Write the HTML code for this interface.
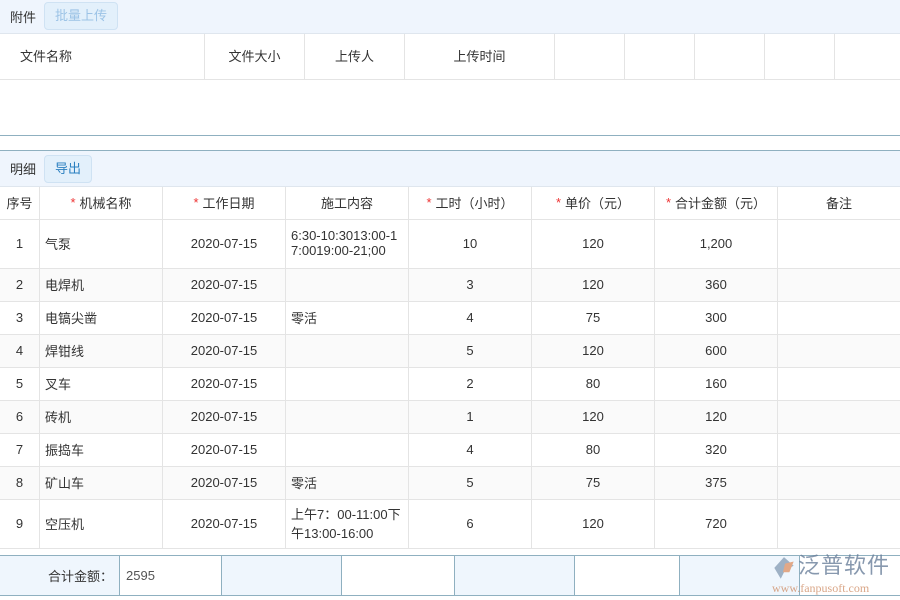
<!DOCTYPE html><html><head><style>
*{margin:0;padding:0;box-sizing:border-box}
body{width:900px;height:600px;background:#fff;font-family:"Liberation Sans","Noto Sans CJK SC",sans-serif;font-size:13px;color:#333;position:relative;overflow:hidden}
.bar{position:absolute;left:0;width:900px;background:#eff5fd;}
.btn{position:absolute;border:1px solid #cfe2f3;background:#e3f0fb;border-radius:4px;font-size:13px;text-align:center}
.c{position:absolute;display:flex;align-items:center;justify-content:center;border-right:1px solid #e4e4e4;border-bottom:1px solid #e4e4e4;padding-bottom:2px}
.l{justify-content:flex-start;padding-left:5px}
.s{color:#e33;margin-right:4px}
</style></head><body>
<div class="bar" style="top:0;height:34px;border-bottom:1px solid #dfe6ee"></div>
<div style="position:absolute;left:10px;top:7px">附件</div>
<div class="btn" style="left:44px;top:2px;width:74px;height:28px;line-height:26px;color:#9cc3e6">批量上传</div>
<div style="position:absolute;top:135px;left:0;width:900px;border-top:1px solid #8fb0c0"></div>
<div class="bar" style="top:150px;height:37px;border-top:1px solid #8fb0c0;border-bottom:1px solid #dfe6ee"></div>
<div style="position:absolute;left:10px;top:159px">明细</div>
<div class="btn" style="left:44px;top:155px;width:48px;height:28px;line-height:26px;color:#2a7fc0">导出</div>
<div style="position:absolute;top:555px;left:0;width:900px;height:41px;border-top:1px solid #8fb0c0;border-bottom:1px solid #8fb0c0"></div>
<script>
function cell(x,y,w,h,t,cls,bg,nb){var d=document.createElement('div');d.className='c '+(cls||'');d.style.cssText=`left:${x}px;top:${y}px;width:${w}px;height:${h}px;`+(bg?`background:${bg};`:'')+(nb?'border-right:none;':'');d.innerHTML=t;document.body.appendChild(d);}
var tx=[0,205,305,405,555,625,695,765,835,900],tt=['文件名称','文件大小','上传人','上传时间','','','','',''];
for(var i=0;i<9;i++)cell(tx[i],34,tx[i+1]-tx[i],46,tt[i],i==0?'l':'','',i==8);
document.querySelectorAll('.c')[0].style.paddingLeft='20px';
var cx=[0,40,163,286,409,532,655,778,900];
var S='<span class="s">*</span>';
var h=['序号',S+'机械名称',S+'工作日期','施工内容',S+'工时（小时）',S+'单价（元）',S+'合计金额（元）','备注'];
for(var i=0;i<8;i++)cell(cx[i],187,cx[i+1]-cx[i],33,h[i],'','',i==7);
var rows=[['1','气泵','2020-07-15','6:30-10:3013:00-1<br>7:0019:00-21;00','10','120','1,200'],
['2','电焊机','2020-07-15','','3','120','360'],['3','电镐尖凿','2020-07-15','零活','4','75','300'],
['4','焊钳线','2020-07-15','','5','120','600'],['5','叉车','2020-07-15','','2','80','160'],
['6','砖机','2020-07-15','','1','120','120'],['7','振捣车','2020-07-15','','4','80','320'],
['8','矿山车','2020-07-15','零活','5','75','375'],['9','空压机','2020-07-15','上午7：00-11:00下<br>午13:00-16:00','6','120','720']];
var y=220;
rows.forEach(function(r,k){var hh=(k==0||k==8)?49:33;var bg=k%2?'#fafafa':'';r.push('');
for(var i=0;i<8;i++)cell(cx[i],y,cx[i+1]-cx[i],hh,r[i],(i==1||i==3)?'l':'',bg,i==7);y+=hh;});
var fx=[0,120,222,342,455,575,680,800,900];
for(var i=0;i<8;i++){var d=document.createElement('div');d.style.cssText=`position:absolute;left:${fx[i]}px;top:556px;width:${fx[i+1]-fx[i]}px;height:39px;border-right:${i==7?'none':'1px solid #8fb0c0'};background:${i%2==0?'#eff6fd':'#fff'};display:flex;align-items:center;padding:0 6px;`+(i==0?'justify-content:flex-end;':'');d.textContent=i==0?'合计金额：':i==1?'2595':'';if(i==1)d.style.color='#555';document.body.appendChild(d);}
</script>
<div style="position:absolute;left:770px;top:552px;width:130px;height:46px;white-space:nowrap;opacity:.8">
<svg width="28" height="28" viewBox="0 0 26 26" style="position:absolute;left:0;top:3px"><path d="M13 2 L4 12 L10 22 L14 14 L22 10 Z" fill="#8aa0b8"/><path d="M14 8 L22 6 L18 16 L12 16 Z" fill="#e0956a"/></svg>
<div style="position:absolute;left:28px;top:0;font-size:22px;line-height:28px;color:#6a7f9a;letter-spacing:1px">泛普软件</div>
<div style="position:absolute;left:2px;top:29px;font-family:'Liberation Serif',serif;font-size:12px;color:#d0906a">www.fanpusoft.com</div>
</div>
</body></html>
